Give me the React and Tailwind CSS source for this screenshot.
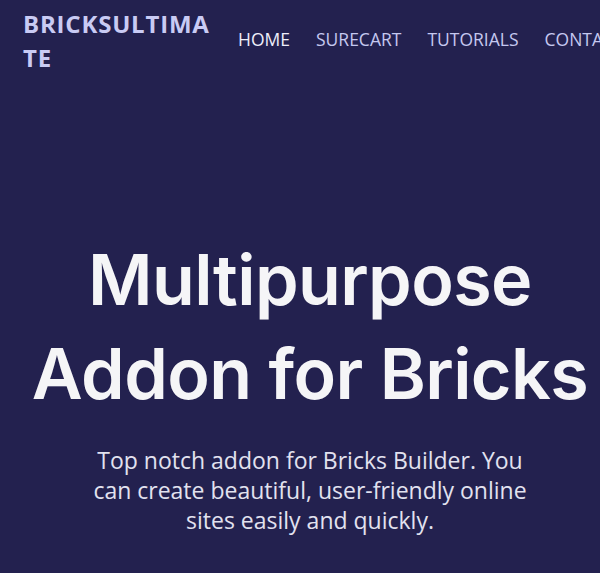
import React from "react";

const links = ["HOME", "SURECART", "TUTORIALS", "CONTACT"];

const App = () => {
  return (
    <div className="min-h-screen overflow-hidden bg-[#23214f] font-['Open_Sans',sans-serif]">
      <div className="flex items-center pl-[23px] pt-[7px]">
        <div className="w-[196px] shrink-0 text-[24px] font-bold leading-[34px] tracking-[0.8px] text-[#c9cbf4] break-all">
          BRICKSULTIMATE
        </div>
        <nav className="ml-[19px] -mt-[4px] flex shrink-0 gap-[26px] whitespace-nowrap text-[17.5px] text-[#c5c8ef]">
          {links.map((l, i) => (
            <a key={l} href="#" className={i === 0 ? "text-[#eeeefa]" : ""}>
              {l}
            </a>
          ))}
        </nav>
      </div>

      <div className="mt-[158px] flex w-[620px] flex-col items-center text-center">
        <h1 className="font-['Inter',sans-serif] text-[70px] font-semibold leading-[94px] tracking-[-0.6px] text-[#f5f5f7]">
          Multipurpose
          <br />
          Addon for Bricks
        </h1>
        <p className="mt-[24px] w-[450px] text-[23px] leading-[30px] text-[#e2e2ef]">
          Top notch addon for Bricks Builder. You can create beautiful, user-friendly online sites easily and quickly.
        </p>
      </div>
    </div>
  );
};

export default App;
